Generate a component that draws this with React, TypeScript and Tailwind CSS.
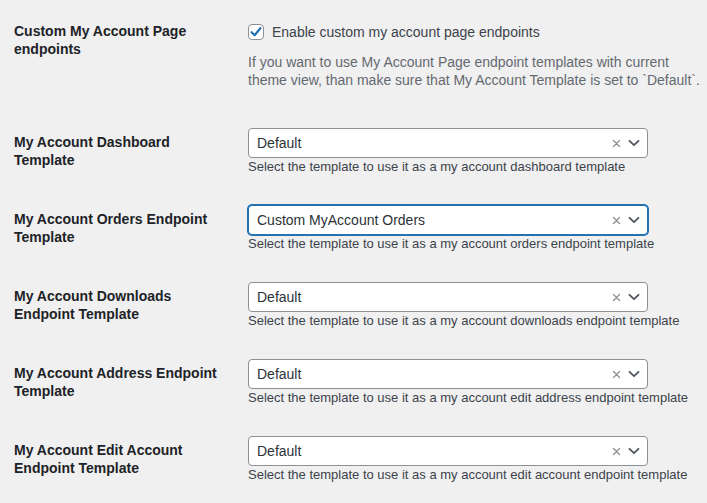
import React from "react";

const font = { fontFamily: '"Liberation Sans", Arial, sans-serif' };

function Chevron() {
  return (
    <svg width="14" height="14" viewBox="0 0 14 14" fill="none">
      <path d="M2.5 4.8 L7 9.2 L11.5 4.8" stroke="#50575e" strokeWidth="1.8" strokeLinecap="round" strokeLinejoin="round" />
    </svg>
  );
}

function Clear() {
  return (
    <svg width="9" height="9" viewBox="0 0 9 9" fill="none">
      <path d="M1.5 1.5 L7.5 7.5 M7.5 1.5 L1.5 7.5" stroke="#8c8f94" strokeWidth="1.3" strokeLinecap="round" />
    </svg>
  );
}

function SelectRow({
  line1,
  line2,
  value,
  help,
  focused,
}: {
  line1: string;
  line2: string;
  value: string;
  help: string;
  focused?: boolean;
}) {
  return (
    <div className="flex h-[77px]">
      <div className="w-[248px] shrink-0 pl-[14px] pt-[20px] text-[14px] leading-[18px] font-bold text-[#1d2327]">
        <div>{line1}</div>
        <div>{line2}</div>
      </div>
      <div className="pt-[15px]">
        <div
          className={
            focused
              ? "flex h-[30px] w-[400px] items-center rounded-[4px] border border-[#2271b1] bg-white pl-[8px] pr-[6px] shadow-[0_0_0_1px_#2271b1]"
              : "flex h-[30px] w-[400px] items-center rounded-[4px] border border-[#8c8f94] bg-white pl-[8px] pr-[6px]"
          }
        >
          <span className="flex-1 text-[14px] text-[#2c3338]">{value}</span>
          <span className="mr-[6px] flex items-center">
            <Clear />
          </span>
          <Chevron />
        </div>
        <div className="whitespace-nowrap text-[13px] leading-[17px] text-[#3c434a]">{help}</div>
      </div>
    </div>
  );
}

export default function App() {
  return (
    <div className="min-h-[503px] w-full overflow-hidden bg-[#f0f0f1] pt-[2px]" style={font}>
      <div className="flex h-[111px]">
        <div className="w-[248px] shrink-0 pl-[14px] pt-[20px] text-[14px] leading-[18px] font-bold text-[#1d2327]">
          <div>Custom My Account Page</div>
          <div>endpoints</div>
        </div>
        <div className="pt-[21px]">
          <div className="flex items-center">
            <span className="flex h-[16px] w-[16px] items-center justify-center rounded-[4px] border border-[#8c8f94] bg-white">
              <svg width="14" height="14" viewBox="0 0 14 14" fill="none">
                <path d="M2.6 7.2 L5.6 10.2 L11.4 3.2" stroke="#2271b1" strokeWidth="2.2" strokeLinecap="round" strokeLinejoin="round" />
              </svg>
            </span>
            <span className="ml-[8px] text-[14px] leading-[18px] text-[#3c434a]">Enable custom my account page endpoints</span>
          </div>
          <div className="mt-[12px] whitespace-nowrap text-[14px] leading-[18px] text-[#646970]">
            <div>If you want to use My Account Page endpoint templates with current</div>
            <div>theme view, than make sure that My Account Template is set to `Default`.</div>
          </div>
        </div>
      </div>
      <SelectRow
        line1="My Account Dashboard"
        line2="Template"
        value="Default"
        help="Select the template to use it as a my account dashboard template"
      />
      <SelectRow
        line1="My Account Orders Endpoint"
        line2="Template"
        value="Custom MyAccount Orders"
        help="Select the template to use it as a my account orders endpoint template"
        focused
      />
      <SelectRow
        line1="My Account Downloads"
        line2="Endpoint Template"
        value="Default"
        help="Select the template to use it as a my account downloads endpoint template"
      />
      <SelectRow
        line1="My Account Address Endpoint"
        line2="Template"
        value="Default"
        help="Select the template to use it as a my account edit address endpoint template"
      />
      <SelectRow
        line1="My Account Edit Account"
        line2="Endpoint Template"
        value="Default"
        help="Select the template to use it as a my account edit account endpoint template"
      />
    </div>
  );
}
